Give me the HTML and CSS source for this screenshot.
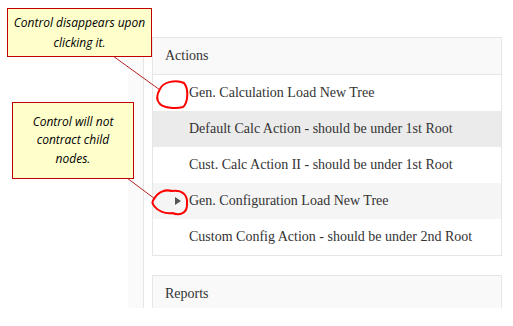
FILE: index.html
```html
<!DOCTYPE html>
<html lang="en">
<head>
  <meta charset="UTF-8">
  <title>Tree controls</title>
  <link rel="stylesheet" href="styles.css">
</head>
<body>
  <div class="page">
    <div class="gutter"></div>
    <div class="rail"></div>
    <div class="content">
      <div class="panel">
        <div class="panel-heading">Actions</div>
        <div class="row"><span class="toggle"></span>Gen. Calculation Load New Tree</div>
        <div class="row selected"><span class="toggle"></span>Default Calc Action - should be under 1st Root</div>
        <div class="row"><span class="toggle"></span>Cust. Calc Action II - should be under 1st Root</div>
        <div class="row hover"><span class="toggle"><span class="caret"></span></span>Gen. Configuration Load New Tree</div>
        <div class="row"><span class="toggle"></span>Custom Config Action - should be under 2nd Root</div>
      </div>

      <div class="panel">
        <div class="panel-heading">Reports</div>
      </div>
    </div>
  </div>

  <!-- annotations -->
  <svg class="marks" width="513" height="326" viewBox="0 0 513 326">
    <line x1="113" y1="56" x2="160" y2="90" class="leader"/>
    <line x1="127" y1="178" x2="155" y2="199" class="leader"/>
    <path class="loop" d="M160,89 C163,82 176,79 184,83 C189,89 188,103 183,107 C176,109 164,108 160,104 C156,100 157,94 160,89 Z"/>
    <path class="loop" d="M154,199 C158,192 165,189 172,191 C182,190 188,194 187,205 C187,213 180,216 172,213 C165,214 158,211 155,207 C152,204 152,201 154,199 Z"/>
  </svg>

  <div class="callout callout-top">Control disappears upon clicking it.</div>
  <div class="callout callout-bottom">Control will not contract child nodes.</div>
</body>
</html>
```

FILE: styles.css
```css
:root {
  --text-color: #333333;
  --border: #e6e6e6;
  --heading-bg: #f9f9f9;
  --selected-bg: #ebebeb;
  --hover-bg: #f5f5f5;
  --note-bg: #ffffcc;
  --note-border: #c00000;
}

* {
  box-sizing: border-box;
  margin: 0;
  padding: 0;
}

body {
  font-family: "Liberation Serif", serif;
  font-size: 14px;
  color: var(--text-color);
  background: #ffffff;
  width: 513px;
  height: 326px;
  overflow: hidden;
  position: relative;
}

.page {
  display: flex;
  margin-top: 37px;
  height: 271px;
  overflow: hidden;
}

.gutter {
  width: 128px;
}

.rail {
  width: 16px;
  background: #fafafa;
  border-right: 1px solid var(--border);
}

.content {
  padding-left: 8px;
  width: 358px;
}

.panel {
  border: 1px solid var(--border);
  margin-bottom: 19px;
}

.panel-heading {
  height: 37px;
  line-height: 36px;
  padding-left: 12px;
  background: var(--heading-bg);
  border-bottom: 1px solid var(--border);
}

.row {
  display: flex;
  align-items: center;
  height: 36px;
  padding-left: 22px;
  white-space: nowrap;
}

.row.selected {
  background: var(--selected-bg);
}

.row.hover {
  background: var(--hover-bg);
}

.toggle {
  width: 14px;
  display: flex;
  align-items: center;
}

.caret {
  width: 0;
  height: 0;
  border-left: 6px solid #555555;
  border-top: 4px solid transparent;
  border-bottom: 4px solid transparent;
}

.marks {
  position: absolute;
  top: 0;
  left: 0;
  pointer-events: none;
}

.leader {
  stroke: #b22222;
  stroke-width: 1;
}

.loop {
  fill: none;
  stroke: #ff0000;
  stroke-width: 2;
}

.callout {
  position: absolute;
  background: var(--note-bg);
  border: 1px solid var(--note-border);
  font-family: "Open Sans", sans-serif;
  font-style: italic;
  font-size: 12px;
  color: #000000;
  text-align: center;
  display: flex;
  align-items: center;
  justify-content: center;
}

.callout-top {
  left: 7px;
  top: 8px;
  width: 145px;
  height: 49px;
  padding: 0 2px;
  line-height: 20px;
}

.callout-bottom {
  left: 12px;
  top: 102px;
  width: 122px;
  height: 77px;
  padding: 0 12px;
  line-height: 18.5px;
}
```
